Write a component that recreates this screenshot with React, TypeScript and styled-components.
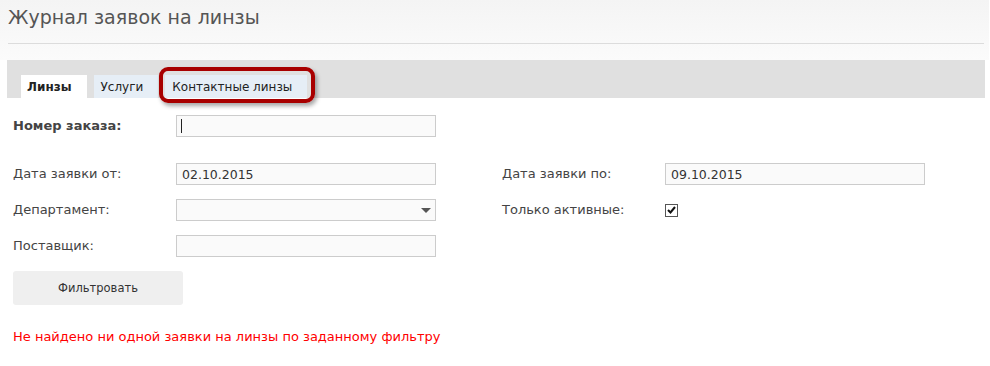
import React from "react";
import styled, { createGlobalStyle } from "styled-components";

const GlobalStyle = createGlobalStyle`
  body {
    margin: 0;
    background: #ffffff;
    font-family: "DejaVu Sans", Verdana, sans-serif;
    color: #444;
  }
`;

const Page = styled.div`
  width: 990px;
  height: 366px;
  overflow: hidden;
`;

const Header = styled.div`
  width: 989px;
  height: 60px;
  box-sizing: border-box;
  padding: 5px 5px 0 8px;
  background: linear-gradient(#f4f4f4, #fbfbfb);
`;

const Title = styled.h1`
  margin: 0;
  font-size: 19px;
  font-weight: normal;
  line-height: 25px;
  color: #555;
  padding-bottom: 13px;
  border-bottom: 1px solid #dcdcdc;
`;

const TabBar = styled.div`
  position: relative;
  margin-left: 7px;
  width: 978px;
  height: 38px;
  box-sizing: border-box;
  background: #e0e0e0;
  display: flex;
  align-items: flex-end;
  gap: 7px;
  padding-left: 14px;
`;

const Tab = styled.div<{ $active?: boolean }>`
  height: 23px;
  line-height: 24px;
  padding: 0 15px 0 ${(p) => (p.$active ? "6px" : "7px")};
  font-size: 12px;
  font-weight: ${(p) => (p.$active ? "bold" : "normal")};
  color: #222;
  background: ${(p) => (p.$active ? "#ffffff" : "#e6eef6")};
`;

const Highlight = styled.div`
  position: absolute;
  left: 152px;
  top: 7px;
  width: 156px;
  height: 36px;
  box-sizing: border-box;
  border: 4px solid #a80000;
  border-radius: 9px;
  box-shadow: 2px 3px 4px rgba(0, 0, 0, 0.35);
  pointer-events: none;
`;

const Form = styled.div`
  padding: 17px 0 0 13px;
  display: grid;
  grid-template-columns: 163px 260px 66px 163px 260px;
  grid-template-rows: 48px 36px 36px 22px;
  align-items: start;
`;

const Label = styled.div<{ $bold?: boolean; $col?: number }>`
  font-size: 13px;
  line-height: 22px;
  color: #444;
  font-weight: ${(p) => (p.$bold ? "bold" : "normal")};
  grid-column: ${(p) => p.$col ?? 1};
`;

const FieldWrap = styled.div<{ $col?: number }>`
  position: relative;
  grid-column: ${(p) => p.$col ?? 2};
  height: 22px;
`;

const Input = styled.input`
  display: block;
  width: 100%;
  height: 22px;
  box-sizing: border-box;
  border: 1px solid #cccccc;
  background: #fafafa;
  padding: 0 5px;
  font-family: "DejaVu Sans", Verdana, sans-serif;
  font-size: 12.5px;
  color: #333;
  outline: none;
`;

const Caret = styled.span`
  position: absolute;
  left: 5px;
  top: 4px;
  width: 1px;
  height: 14px;
  background: #222;
`;

const SelectArrow = styled.span`
  position: absolute;
  right: 5px;
  top: 9px;
  width: 0;
  height: 0;
  border-left: 5px solid transparent;
  border-right: 5px solid transparent;
  border-top: 5px solid #555;
`;

const CheckCell = styled.div`
  grid-column: 5;
  height: 22px;
  display: flex;
  align-items: center;
`;

const CheckBox = styled.span`
  width: 13px;
  height: 13px;
  box-sizing: border-box;
  border: 1px solid #555;
  background: #fff;
  display: flex;
  align-items: center;
  justify-content: center;
`;

const Actions = styled.div`
  padding: 14px 0 0 13px;
`;

const Button = styled.button`
  display: block;
  width: 170px;
  height: 34px;
  border: none;
  border-radius: 3px;
  background: #efefef;
  font-family: "DejaVu Sans", Verdana, sans-serif;
  font-size: 11.5px;
  color: #333;
`;

const Message = styled.div`
  padding: 24px 0 0 13px;
  font-size: 13px;
  color: #ff0000;
`;

export default function App() {
  return (
    <Page>
      <GlobalStyle />
      <Header>
        <Title>Журнал заявок на линзы</Title>
      </Header>
      <TabBar>
        <Tab $active>Линзы</Tab>
        <Tab>Услуги</Tab>
        <Tab>Контактные линзы</Tab>
        <Highlight />
      </TabBar>
      <Form>
        <Label $bold>Номер заказа:</Label>
        <FieldWrap>
          <Input readOnly defaultValue="" />
          <Caret />
        </FieldWrap>
        <Label>Дата заявки от:</Label>
        <FieldWrap>
          <Input readOnly defaultValue="02.10.2015" />
        </FieldWrap>
        <Label $col={4}>Дата заявки по:</Label>
        <FieldWrap $col={5}>
          <Input readOnly defaultValue="09.10.2015" />
        </FieldWrap>
        <Label>Департамент:</Label>
        <FieldWrap>
          <Input readOnly defaultValue="" />
          <SelectArrow />
        </FieldWrap>
        <Label $col={4}>Только активные:</Label>
        <CheckCell>
          <CheckBox>
            <svg width="9" height="8" viewBox="0 0 9 8">
              <path d="M1 4 L3.5 6.5 L8 1" fill="none" stroke="#111" strokeWidth="2" />
            </svg>
          </CheckBox>
        </CheckCell>
        <Label>Поставщик:</Label>
        <FieldWrap>
          <Input readOnly defaultValue="" />
        </FieldWrap>
      </Form>
      <Actions>
        <Button>Фильтровать</Button>
      </Actions>
      <Message>Не найдено ни одной заявки на линзы по заданному фильтру</Message>
    </Page>
  );
}
